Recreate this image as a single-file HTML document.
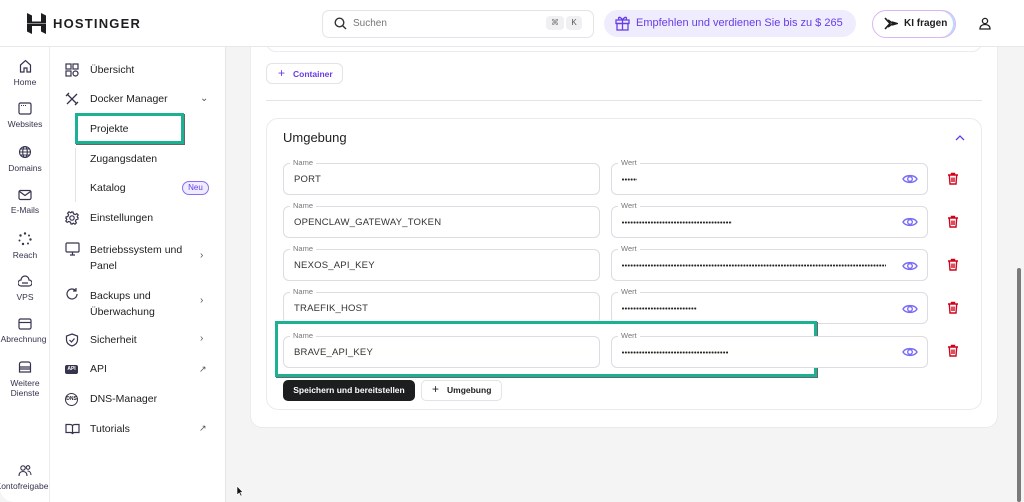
<!DOCTYPE html>
<html><head><meta charset="utf-8"><style>
*{box-sizing:border-box;margin:0;padding:0}
body{width:1024px;height:502px;overflow:hidden;font-family:"Liberation Sans",sans-serif;background:#f4f4f4;position:relative;color:#1d1e20}
.abs{position:absolute}
.hdr{left:0;top:0;width:1024px;height:47px;background:#fff;border-bottom:1px solid #e8e8ec;z-index:5}
.top{z-index:6}
.rail{left:0;top:47px;width:50px;height:455px;background:#fff;border-right:1px solid #ececf0;border-bottom-left-radius:14px}
.nav{left:50px;top:47px;width:176px;height:455px;background:#fff;border-right:1px solid #e6e6ea}
.ri{position:absolute;width:50px;text-align:center;font-size:8.5px;color:#36344d}
.ri svg{display:block;margin:0 auto 4px}
.ni{position:absolute;left:90px;font-size:10.5px;color:#1d1e20}
.nic{position:absolute;left:65px}
.chev{position:absolute;left:200px;font-size:10px;color:#555}
.card{left:250px;top:30px;width:748px;height:398px;background:#fff;border:1px solid #ebebef;border-radius:12px}
.fld{position:absolute;height:32px;border:1px solid #dcdce2;border-radius:6px;background:#fff}
.lbl{position:absolute;top:-6px;left:6px;background:#fff;padding:0 3px;font-size:7.5px;color:#777}
.val{position:absolute;left:10px;top:10px;font-size:9.5px;color:#333;letter-spacing:.2px}
.dots{position:absolute;left:10px;top:14px;height:3px;background:radial-gradient(circle at 1px 1.5px,#222 0.9px,transparent 1.2px) 0 0/2.9px 3px repeat-x}
</style></head><body>
<div class="abs hdr"></div>
<svg class="abs top" style="left:27px;top:13px" width="19" height="21" viewBox="0 0 19 21"><path d="M0 0l5 2.5v6l9 0V0l5 2.5v8H0z M0 11h19v10l-5-2.5v-5.5H5V21L0 18.5z" fill="#1d1e20"/></svg>
<div class="abs top" style="left:53px;top:16px;font-size:13px;font-weight:bold;letter-spacing:1.2px">HOSTINGER</div>
<div class="abs top" style="left:322px;top:10px;width:272px;height:28px;border:1px solid #e3e3e8;border-radius:7px;background:#fff"></div>
<svg class="abs top" style="left:334px;top:17px" width="13" height="13" viewBox="0 0 13 13"><circle cx="5.5" cy="5.5" r="4.3" fill="none" stroke="#333" stroke-width="1.4"/><path d="M8.7 8.7L12 12" stroke="#333" stroke-width="1.4"/></svg>
<div class="abs top" style="left:353px;top:18px;font-size:10px;color:#777">Suchen</div>
<div class="abs top" style="left:546px;top:16px;width:18px;height:14px;background:#f0f0f3;border-radius:4px;font-size:8px;text-align:center;line-height:14px;color:#777">⌘</div>
<div class="abs top" style="left:566px;top:16px;width:16px;height:14px;background:#f0f0f3;border-radius:4px;font-size:8px;text-align:center;line-height:14px;color:#555">K</div>
<div class="abs top" style="left:604px;top:10px;width:252px;height:27px;background:#efecfd;border-radius:14px"></div>
<svg class="abs top" style="left:615px;top:15px" width="15" height="16" viewBox="0 0 15 16"><g fill="none" stroke="#673de6" stroke-width="1.3"><rect x="1" y="5" width="13" height="3.5"/><rect x="2" y="8.5" width="11" height="6.5"/><path d="M7.5 5v10M7.5 5C5 1 2.5 2 4 4.5M7.5 5C10 1 12.5 2 11 4.5"/></g></svg>
<div class="abs top" style="left:636px;top:17px;font-size:11px;color:#673de6">Empfehlen und verdienen Sie bis zu $ 265</div>
<div class="abs top" style="left:872px;top:10px;width:84px;height:28px;border:1px solid #d9b7f0;border-radius:14px;background:#fff;box-shadow:inset -2px 0 0 #bcd8ff"></div>
<svg class="abs top" style="left:884px;top:17px" width="14" height="13" viewBox="0 0 14 13"><path d="M1 1l5 5.5L1 12M4 3l5 3.5L4 10M8 5l5 1.5L8 8" fill="none" stroke="#1d1e20" stroke-width="1.6"/></svg>
<div class="abs top" style="left:904px;top:18px;font-size:10px;font-weight:bold">KI fragen</div>
<svg class="abs top" style="left:979px;top:17px" width="12" height="13" viewBox="0 0 12 13"><circle cx="6" cy="4" r="2.6" fill="none" stroke="#1d1e20" stroke-width="1.3"/><path d="M1 12c0-3 2-4.5 5-4.5s5 1.5 5 4.5z" fill="none" stroke="#1d1e20" stroke-width="1.3"/></svg>

<div class="abs rail"></div>
<div class="ri" style="top:59px"><svg width="13" height="14" viewBox="0 0 13 14"><path d="M1.5 6L6.5 1.5 11.5 6V13H8V9H5v4H1.5z" fill="none" stroke="#36344d" stroke-width="1.2"/></svg>Home</div>
<div class="ri" style="top:102px"><svg width="14" height="13" viewBox="0 0 14 13"><rect x="1" y="1" width="12" height="11" rx="1.5" fill="none" stroke="#36344d" stroke-width="1.2"/><path d="M3 3.5h1M5 3.5h1M7 3.5h1" stroke="#36344d"/></svg>Websites</div>
<div class="ri" style="top:145px"><svg width="14" height="14" viewBox="0 0 14 14"><g fill="none" stroke="#36344d" stroke-width="1.1"><circle cx="7" cy="7" r="5.5"/><ellipse cx="7" cy="7" rx="2.3" ry="5.5"/><path d="M1.5 7h11M2.5 4h9M2.5 10h9"/></g></svg>Domains</div>
<div class="ri" style="top:189px"><svg width="14" height="12" viewBox="0 0 14 12"><rect x="1" y="1.5" width="12" height="9" rx="1.5" fill="none" stroke="#36344d" stroke-width="1.2"/><path d="M1.5 2.5l5.5 4 5.5-4" fill="none" stroke="#36344d" stroke-width="1.2"/></svg>E-Mails</div>
<div class="ri" style="top:232px"><svg width="14" height="14" viewBox="0 0 14 14"><g fill="#36344d"><circle cx="7" cy="1.5" r="1.2"/><circle cx="11" cy="3.5" r="1"/><circle cx="12.5" cy="7.5" r="1.2"/><circle cx="10" cy="11.5" r="1"/><circle cx="5" cy="12" r="1.2"/><circle cx="1.5" cy="8.5" r="1"/><circle cx="2.5" cy="3.5" r="1.2"/></g></svg>Reach</div>
<div class="ri" style="top:275px"><svg width="14" height="13" viewBox="0 0 14 13"><path d="M3 11h8a3 3 0 0 0 0-6 4 4 0 0 0-8 0 3 3 0 0 0 0 6z M4 8h6" fill="none" stroke="#36344d" stroke-width="1.2"/></svg>VPS</div>
<div class="ri" style="top:318px"><svg width="14" height="12" viewBox="0 0 14 12"><rect x="1" y="1" width="12" height="10" rx="1.5" fill="none" stroke="#36344d" stroke-width="1.2"/><path d="M1 4.5h12" stroke="#36344d" stroke-width="1.2"/></svg><span style="margin-left:-3px">Abrechnung</span></div>
<div class="ri" style="top:361px"><svg width="14" height="13" viewBox="0 0 14 13"><path d="M1.5 6V3a2 2 0 0 1 2-2h7a2 2 0 0 1 2 2v3zM1.5 6v5h11V6M1.5 8h11" fill="none" stroke="#36344d" stroke-width="1.2"/></svg>Weitere<br>Dienste</div>
<div class="ri" style="top:464px"><svg width="14" height="13" viewBox="0 0 14 13"><g fill="none" stroke="#36344d" stroke-width="1.1"><circle cx="5" cy="4" r="2.2"/><circle cx="10" cy="3.5" r="1.8"/><path d="M1 12c0-3 1.5-4.5 4-4.5S9 9 9 12M9.5 7c2 0 3.5 1.5 3.5 4"/></g></svg><span style="margin-left:-6px">Kontofreigabe</span></div>

<div class="abs nav"></div>
<svg class="nic" style="top:63px" width="14" height="14" viewBox="0 0 14 14"><g fill="none" stroke="#36344d" stroke-width="1.2"><rect x="1" y="1" width="5" height="5"/><rect x="8" y="1" width="5" height="5"/><rect x="1" y="8" width="5" height="5"/><rect x="8" y="8" width="5" height="5" rx="2.5"/></g></svg>
<div class="ni" style="top:64px">Übersicht</div>
<svg class="nic" style="top:92px" width="14" height="14" viewBox="0 0 14 14"><path d="M2 2l10 10M12 2L2 12M1 4l3-3M10 13l3-3" fill="none" stroke="#36344d" stroke-width="1.3"/></svg>
<div class="ni" style="top:93px">Docker Manager</div>
<div class="chev" style="top:93px">⌄</div>
<div class="abs" style="left:75px;top:148px;width:1px;height:54px;background:#e4e4e8"></div>
<div class="ni" style="top:153px">Zugangsdaten</div>
<div class="ni" style="top:182px">Katalog</div>
<div class="abs" style="left:182px;top:181px;width:27px;height:14px;border:1px solid #8c6cf0;border-radius:7px;background:#efecfd;font-size:8px;color:#673de6;text-align:center;line-height:12px">Neu</div>
<svg class="nic" style="top:211px" width="14" height="14" viewBox="0 0 14 14"><g fill="none" stroke="#36344d" stroke-width="1.2"><circle cx="7" cy="7" r="2.2"/><path d="M6 1h2l.5 1.8 1.7.8 1.6-1 1.4 1.4-1 1.6.8 1.7L13 6v2l-1.8.5-.8 1.7 1 1.6-1.4 1.4-1.6-1-1.7.8L8 13H6l-.5-1.8-1.7-.8-1.6 1-1.4-1.4 1-1.6-.8-1.7L1 8V6l1.8-.5.8-1.7-1-1.6 1.4-1.4 1.6 1 1.7-.8z"/></g></svg>
<div class="ni" style="top:212px">Einstellungen</div>
<svg class="nic" style="top:242px" width="15" height="14" viewBox="0 0 15 14"><rect x="1" y="1" width="13" height="9" rx="1" fill="none" stroke="#36344d" stroke-width="1.2"/><path d="M5 13h5M7.5 10v3" stroke="#36344d" stroke-width="1.2"/></svg>
<div class="ni" style="top:242px;line-height:16px">Betriebssystem und<br>Panel</div>
<div class="chev" style="top:250px">›</div>
<svg class="nic" style="top:287px" width="14" height="14" viewBox="0 0 14 14"><path d="M12 7a5 5 0 1 1-1.5-3.6M11 1v3H8" fill="none" stroke="#36344d" stroke-width="1.2"/></svg>
<div class="ni" style="top:288px;line-height:16px">Backups und<br>Überwachung</div>
<div class="chev" style="top:295px">›</div>
<svg class="nic" style="top:333px" width="14" height="14" viewBox="0 0 14 14"><path d="M7 1l5.5 2v4c0 3-2.5 5-5.5 6-3-1-5.5-3-5.5-6V3zM4.5 7l2 2 3-3.5" fill="none" stroke="#36344d" stroke-width="1.2"/></svg>
<div class="ni" style="top:334px">Sicherheit</div>
<div class="chev" style="top:333px">›</div>
<div class="abs" style="left:65px;top:365px;width:13px;height:9px;background:#36344d;border-radius:2px;font-size:5px;color:#fff;text-align:center;line-height:9px;font-weight:bold">API</div>
<div class="ni" style="top:363px">API</div>
<div class="abs" style="left:199px;top:364px;font-size:9px;color:#555">↗</div>
<div class="abs" style="left:65px;top:393px;width:13px;height:13px;border:1px solid #36344d;border-radius:7px;font-size:5px;text-align:center;line-height:11px;font-weight:bold">DNS</div>
<div class="ni" style="top:393px">DNS-Manager</div>
<svg class="nic" style="top:423px" width="15" height="12" viewBox="0 0 15 12"><path d="M1 1.5h4.5A2 2 0 0 1 7.5 3.5V11A2 2 0 0 0 5.5 9.5H1zM14 1.5H9.5A2 2 0 0 0 7.5 3.5V11A2 2 0 0 1 9.5 9.5H14z" fill="none" stroke="#36344d" stroke-width="1.2"/></svg>
<div class="ni" style="top:423px">Tutorials</div>
<div class="abs" style="left:199px;top:423px;font-size:9px;color:#555">↗</div>
<div class="abs" style="left:75px;top:113px;width:109px;height:31px;border:3px solid #1bb192;box-shadow:1px 1px 0 #666;background:#fff"></div>
<div class="ni" style="top:123px">Projekte</div>

<div class="abs card"></div>
<div class="abs" style="left:266px;top:20px;width:716px;height:32px;border:1px solid #ebebef;border-radius:10px;background:#fff"></div>
<div class="abs" style="left:266px;top:63px;width:77px;height:21px;border:1px solid #e3e3e8;border-radius:6px;background:#fff"></div>
<div class="abs" style="left:278px;top:66px;font-size:12px;color:#673de6">+</div>
<div class="abs" style="left:293px;top:69px;font-size:8.5px;font-weight:bold;color:#673de6">Container</div>
<div class="abs" style="left:266px;top:100px;width:716px;height:1px;background:#e4e4e8"></div>
<div class="abs" style="left:266px;top:118px;width:716px;height:292px;border:1px solid #ebebef;border-radius:12px;background:#fff"></div>
<div class="abs" style="left:283px;top:130px;font-size:13px;font-weight:500">Umgebung</div>
<svg class="abs" style="left:955px;top:134px" width="10" height="7" viewBox="0 0 10 7"><path d="M1 6l4-4 4 4" fill="none" stroke="#673de6" stroke-width="1.3"/></svg>

<div class="fld" style="left:283px;top:163px;width:317px"><span class="lbl">Name</span><span class="val">PORT</span></div>
<div class="fld" style="left:611px;top:163px;width:317px"><span class="lbl">Wert</span><span class="dots" style="width:15px"></span></div>
<div class="fld" style="left:283px;top:206px;width:317px"><span class="lbl">Name</span><span class="val">OPENCLAW_GATEWAY_TOKEN</span></div>
<div class="fld" style="left:611px;top:206px;width:317px"><span class="lbl">Wert</span><span class="dots" style="width:110px"></span></div>
<div class="fld" style="left:283px;top:249px;width:317px"><span class="lbl">Name</span><span class="val">NEXOS_API_KEY</span></div>
<div class="fld" style="left:611px;top:249px;width:317px"><span class="lbl">Wert</span><span class="dots" style="width:264px"></span></div>
<div class="fld" style="left:283px;top:292px;width:317px"><span class="lbl">Name</span><span class="val">TRAEFIK_HOST</span></div>
<div class="fld" style="left:611px;top:292px;width:317px"><span class="lbl">Wert</span><span class="dots" style="width:75px"></span></div>
<div class="abs" style="left:275px;top:321px;width:542px;height:56px;border:3px solid #1bb192;box-shadow:1px 1px 0 #666"></div>
<div class="fld" style="left:283px;top:336px;width:317px"><span class="lbl">Name</span><span class="val">BRAVE_API_KEY</span></div>
<div class="fld" style="left:611px;top:336px;width:317px"><span class="lbl">Wert</span><span class="dots" style="width:106px"></span></div>

<svg width="0" height="0" style="position:absolute"><defs>
<g id="eye"><path d="M1 6C3.5 1.5 12.5 1.5 15 6 12.5 10.5 3.5 10.5 1 6z" fill="none" stroke="#7b6cf6" stroke-width="1.4"/><circle cx="8" cy="6" r="2.3" fill="none" stroke="#7b6cf6" stroke-width="1.4"/></g>
<g id="tr"><path d="M1 3h10M4.5 3V1.5h3V3M2.3 3l.7 9h6l.7-9M5 5.5v4.5M7 5.5v4.5" fill="none" stroke="#d0021b" stroke-width="1.4"/></g></defs></svg>
<svg class="abs" style="left:902px;top:173px" width="16" height="12"><use href="#eye"/></svg>
<svg class="abs" style="left:902px;top:216px" width="16" height="12"><use href="#eye"/></svg>
<svg class="abs" style="left:902px;top:260px" width="16" height="12"><use href="#eye"/></svg>
<svg class="abs" style="left:902px;top:303px" width="16" height="12"><use href="#eye"/></svg>
<svg class="abs" style="left:902px;top:346px" width="16" height="12"><use href="#eye"/></svg>
<svg class="abs" style="left:947px;top:172px" width="12" height="13"><use href="#tr"/></svg>
<svg class="abs" style="left:947px;top:215px" width="12" height="13"><use href="#tr"/></svg>
<svg class="abs" style="left:947px;top:258px" width="12" height="13"><use href="#tr"/></svg>
<svg class="abs" style="left:947px;top:301px" width="12" height="13"><use href="#tr"/></svg>
<svg class="abs" style="left:947px;top:344px" width="12" height="13"><use href="#tr"/></svg>

<div class="abs" style="left:283px;top:380px;width:132px;height:21px;background:#1d1e20;border-radius:5px;color:#fff;font-size:8.5px;font-weight:bold;text-align:center;line-height:21px">Speichern und bereitstellen</div>
<div class="abs" style="left:421px;top:380px;width:81px;height:21px;border:1px solid #e3e3e8;border-radius:5px;background:#fff"></div>
<div class="abs" style="left:432px;top:382px;font-size:12px">+</div>
<div class="abs" style="left:447px;top:385px;font-size:8.5px;font-weight:bold">Umgebung</div>

<div class="abs" style="left:1017px;top:268px;width:4px;height:234px;background:#7a7a7a;border-radius:2px"></div>
<svg class="abs" style="left:236px;top:485px" width="8" height="12" viewBox="0 0 8 12"><path d="M1 1v9l2.2-2 1.5 3 1.3-.6-1.5-3H7z" fill="#111" stroke="#fff" stroke-width=".6"/></svg>
</body></html>
